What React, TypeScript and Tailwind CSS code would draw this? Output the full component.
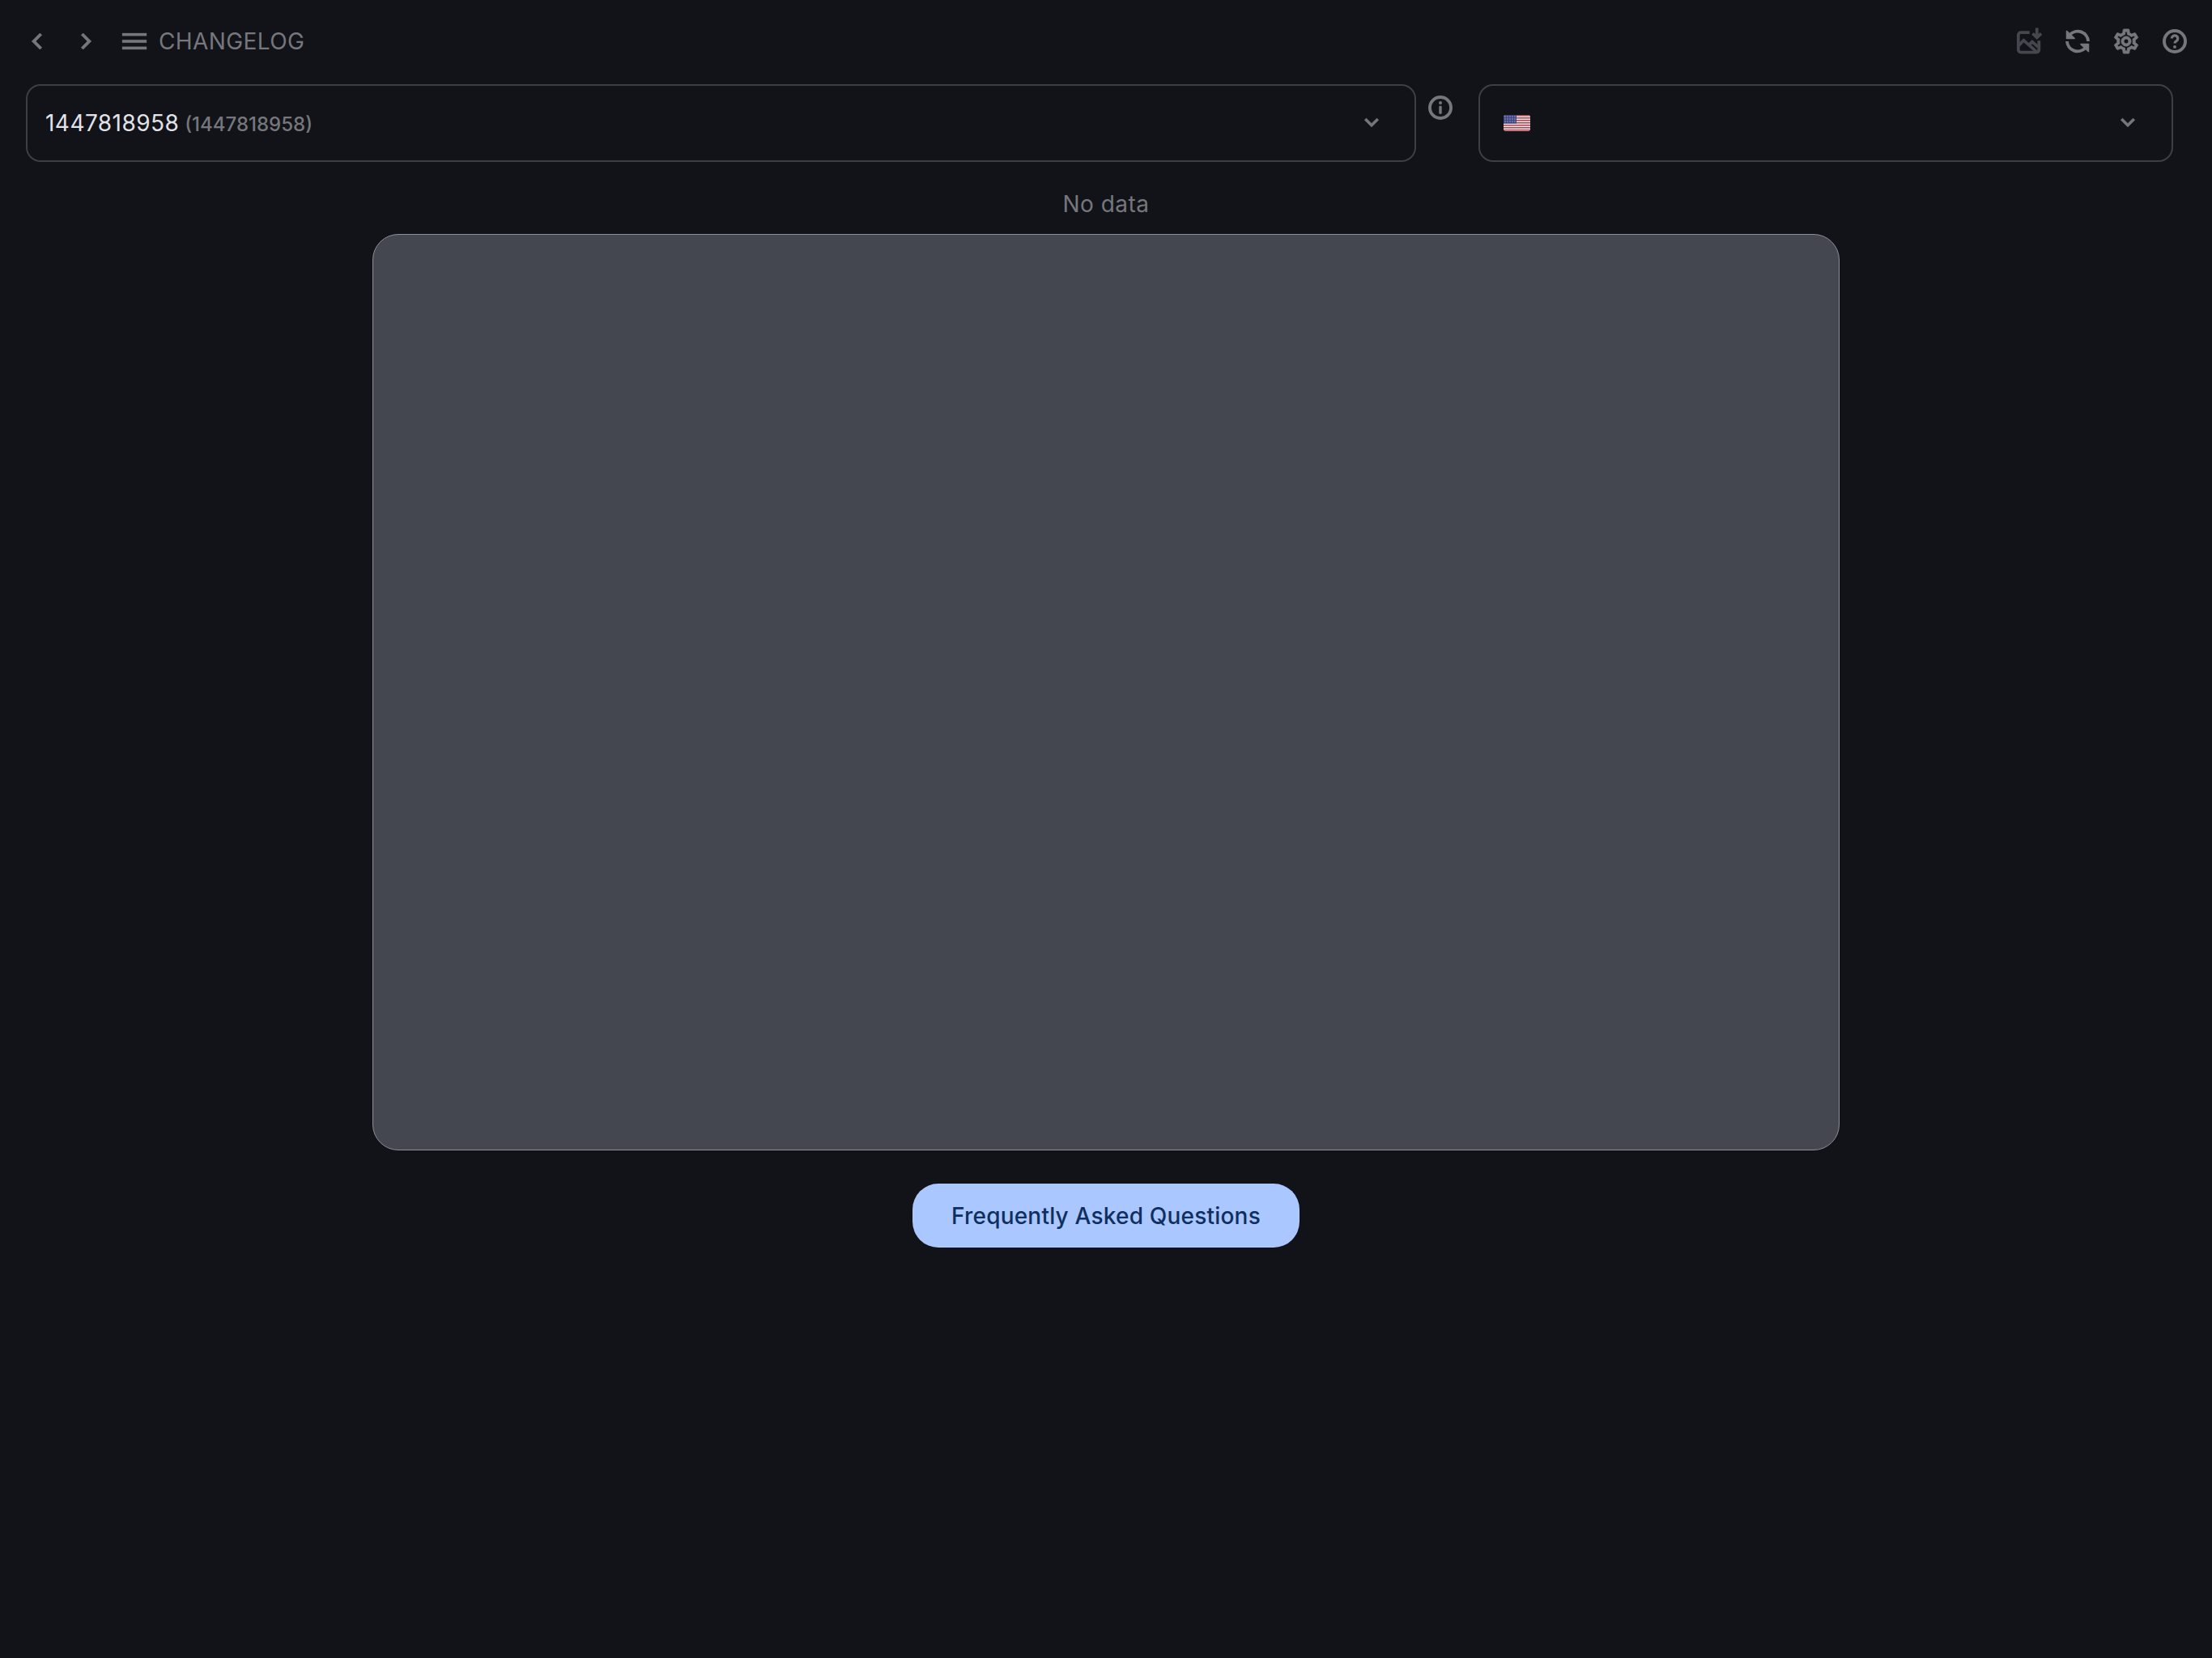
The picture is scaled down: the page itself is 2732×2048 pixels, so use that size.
import React from "react";

const Glyph = ({ d, cls, bold = 0 }: { d: string; cls: string; bold?: number }) => (
  <svg
    viewBox="0 0 24 24"
    className={cls}
    fill="currentColor"
    stroke="currentColor"
    strokeWidth={bold}
    strokeLinejoin="round"
  >
    <path d={d} />
  </svg>
);

const LEFT = "M15.41 7.41 14 6l-6 6 6 6 1.41-1.41L10.83 12z";
const RIGHT = "M8.59 16.59 10 18l6-6-6-6-1.41 1.41L13.17 12z";
const MENU = "M3 18h18v-2H3v2zm0-5h18v-2H3v2zm0-7v2h18V6H3z";
const EXPAND = "M16.59 8.59 12 13.17 7.41 8.59 6 10l6 6 6-6z";
const GEAR =
  "M19.43 12.98c.04-.32.07-.64.07-.98 0-.34-.03-.66-.07-.98l2.11-1.65c.19-.15.24-.42.12-.64l-2-3.46c-.09-.16-.26-.25-.44-.25-.06 0-.12.01-.17.03l-2.49 1c-.52-.4-1.08-.73-1.69-.98l-.38-2.65C14.46 2.18 14.25 2 14 2h-4c-.25 0-.46.18-.49.42l-.38 2.65c-.61.25-1.17.59-1.69.98l-2.49-1c-.06-.02-.12-.03-.18-.03-.17 0-.34.09-.43.25l-2 3.46c-.13.22-.07.49.12.64l2.11 1.65c-.04.32-.07.65-.07.98 0 .33.03.66.07.98l-2.11 1.65c-.19.15-.24.42-.12.64l2 3.46c.09.16.26.25.44.25.06 0 .12-.01.17-.03l2.49-1c.52.4 1.08.73 1.69.98l.38 2.65c.03.24.24.42.49.42h4c.25 0 .46-.18.49-.42l.38-2.65c.61-.25 1.17-.59 1.69-.98l2.49 1c.06.02.12.03.18.03.17 0 .34-.09.43-.25l2-3.46c.12-.22.07-.49-.12-.64l-2.11-1.65zm-1.98-1.71c.04.31.05.52.05.73 0 .21-.02.43-.05.73l-.14 1.13.89.7 1.08.84-.7 1.21-1.27-.51-1.04-.42-.9.68c-.43.32-.84.56-1.25.73l-1.06.43-.16 1.13-.2 1.35h-1.4l-.19-1.35-.16-1.13-1.06-.43c-.43-.18-.83-.41-1.23-.71l-.91-.7-1.06.43-1.27.51-.7-1.21 1.08-.84.89-.7-.14-1.13c-.03-.31-.05-.54-.05-.74s.02-.43.05-.73l.14-1.13-.89-.7-1.08-.84.7-1.21 1.27.51 1.04.42.9-.68c.43-.32.84-.56 1.25-.73l1.06-.43.16-1.13.2-1.35h1.39l.19 1.35.16 1.13 1.06.43c.43.18.83.41 1.23.71l.91.7 1.06-.43 1.27-.51.7 1.21-1.07.85-.89.7.14 1.13zM12 8c-2.21 0-4 1.79-4 4s1.79 4 4 4 4-1.79 4-4-1.79-4-4-4zm0 6c-1.1 0-2-.9-2-2s.9-2 2-2 2 .9 2 2-.9 2-2 2z";

const Help = () => (
  <svg viewBox="0 0 24 24" className="w-9 h-9" fill="none" stroke="currentColor" strokeWidth="2.6">
    <circle cx="12" cy="12" r="8.7" />
    <path d="M9.5 9.7a2.5 2.5 0 1 1 3.9 2.1c-.9.6-1.4 1-1.4 1.9" strokeWidth="2.2" />
    <circle cx="12" cy="16.6" r="1.3" fill="currentColor" stroke="none" />
  </svg>
);

const Info = () => (
  <svg viewBox="0 0 24 24" className="w-9 h-9" fill="none" stroke="currentColor" strokeWidth="2.6">
    <circle cx="12" cy="12" r="8.7" />
    <path d="M12 11.4v4.8" strokeWidth="2.3" strokeLinecap="round" />
    <circle cx="12" cy="8" r="1.35" fill="currentColor" stroke="none" />
  </svg>
);

const Refresh = () => (
  <svg viewBox="0 0 24 24" className="w-9 h-9" fill="none" stroke="currentColor" strokeWidth="2.6">
    <path d="M5.6 6.6A8.7 8.7 0 0 1 20.7 12" />
    <path d="M18.4 17.4A8.7 8.7 0 0 1 3.3 12" />
    <path d="M3 3.6v6h6.4z" fill="currentColor" stroke="currentColor" strokeWidth="1" strokeLinejoin="round" />
    <path d="M21 20.4v-6h-6.4z" fill="currentColor" stroke="currentColor" strokeWidth="1" strokeLinejoin="round" />
  </svg>
);

const SaveImage = () => (
  <svg viewBox="0 0 24 24" className="w-9 h-9" fill="none" stroke="currentColor" strokeWidth="2.5">
    <path d="M12.5 4.8H5.2a2 2 0 0 0-2 2V19a2 2 0 0 0 2 2h13a2 2 0 0 0 2-2v-7.5" />
    <path d="M3.6 15.4l4-4.2 10.4 9.2" />
    <path d="M12.6 14.4l2-2 5 4.4" />
    <path d="M18.5 1v7" />
    <path d="M15 5.6l3.5 3.4L22 5.6" />
  </svg>
);

const Flag = () => (
  <svg viewBox="0 0 33 20" className="w-[33px] h-5 rounded-[3px]">
    <rect width="33" height="20" fill="#e8e8ea" />
    {[0, 3, 6, 9, 12, 15, 18].map((y) => (
      <rect key={y} y={y} width="33" height="1.5" fill="#b4434f" />
    ))}
    <rect width="16" height="10.5" fill="#3f4583" />
    {[2, 5, 8].map((y) =>
      [2, 5, 8, 11, 14].map((x) => (
        <circle key={`${x}-${y}`} cx={x} cy={y} r="0.8" fill="#a9abc9" />
      ))
    )}
  </svg>
);

export default function App() {
  return (
    <div
      className="min-h-screen w-full bg-[#111318] flex flex-col"
      style={{ fontFamily: "Inter, 'Liberation Sans', sans-serif" }}
    >
      <header className="h-[104px] flex items-center justify-between pl-[26px] pr-[28px] pb-[2px] shrink-0">
        <div className="flex items-center gap-5 text-[#76777d]">
          <Glyph d={LEFT} cls="w-10 h-10" bold={0.4} />
          <Glyph d={RIGHT} cls="w-10 h-10" bold={0.4} />
          <div className="flex items-center gap-[10px]">
            <Glyph d={MENU} cls="w-10 h-10" bold={0.2} />
            <span className="text-[28px] leading-10 tracking-[0.4px]">CHANGELOG</span>
          </div>
        </div>
        <div className="flex items-center gap-6 text-[#76777d]">
          <span className="text-[#44474e]">
            <SaveImage />
          </span>
          <Refresh />
          <Glyph d={GEAR} cls="w-9 h-9" bold={0.6} />
          <Help />
        </div>
      </header>

      <div className="flex items-start pl-8 pr-12 shrink-0">
        <div className="flex-1 h-[96px] border-2 border-[#3d3f45] rounded-[18px] flex items-center justify-between pl-[22px] pr-[36px]">
          <div className="flex items-baseline gap-[7px] pt-[1px]">
            <span className="text-[28px] leading-9 tracking-[0.45px] text-[#e2e2e9]">1447818958</span>
            <span className="text-[24px] leading-9 font-medium text-[#76777d]">(1447818958)</span>
          </div>
          <Glyph d={EXPAND} cls="w-[34px] h-[34px] -mt-[2px] text-[#76777d]" bold={0.7} />
        </div>
        <div className="w-[77px] flex justify-start pl-[12px] pt-[11px] text-[#76777d]">
          <Info />
        </div>
        <div className="w-[858px] h-[96px] border-2 border-[#3d3f45] rounded-[18px] flex items-center justify-between pl-[29px] pr-[37px]">
          <Flag />
          <Glyph d={EXPAND} cls="w-[34px] h-[34px] -mt-[2px] text-[#76777d]" bold={0.7} />
        </div>
      </div>

      <main className="flex flex-col items-center">
        <p className="mt-[32px] text-[28px] leading-10 tracking-[0.5px] text-[#76777d]">No data</p>
        <div className="mt-[17px] w-[1812px] h-[1132px] bg-[#44474f] border-[1.5px] border-[#8e9099] rounded-[32px]" />
        <button className="mt-[41px] w-[478px] h-[79px] rounded-[32px] bg-[#aac7ff] text-[#0f2f60] text-[28px] font-medium tracking-[0.2px]">
          Frequently Asked Questions
        </button>
      </main>
    </div>
  );
}
